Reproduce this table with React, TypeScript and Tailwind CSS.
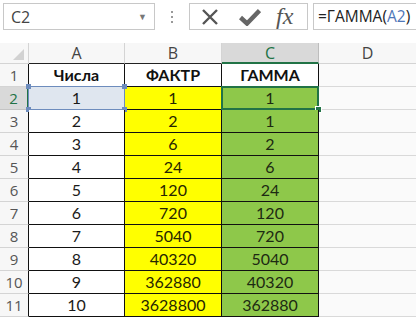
import React from 'react';

const rows: [string, string, string][] = [
  ['1', '1', '1'],
  ['2', '2', '1'],
  ['3', '6', '2'],
  ['4', '24', '6'],
  ['5', '120', '24'],
  ['6', '720', '120'],
  ['7', '5040', '720'],
  ['8', '40320', '5040'],
  ['9', '362880', '40320'],
  ['10', '3628800', '362880'],
];

const ui = "font-['Open_Sans','Noto_Sans',sans-serif]";
const cell = "font-['Lato','Noto_Sans',sans-serif]";

function Handle({ cls }: { cls: string }) {
  return <div className={`absolute w-[5px] h-[5px] bg-[#6d8cbd] ${cls}`} />;
}

export default function App() {
  return (
    <div className="w-[416px] h-[320px] bg-white overflow-hidden select-none">
      {/* formula bar */}
      <div className={`flex items-stretch h-[43px] pt-[3px] pb-[13px] ${ui}`}>
        <div className="ml-[3px] w-[152px] border border-[#c8c8c8] flex items-center justify-between pl-[7px] pr-[7px]">
          <span className="text-[16px] text-[#444]">C2</span>
          <span className="text-[9px] text-[#777] leading-none">▼</span>
        </div>
        <div className="w-[34px] flex flex-col items-center justify-center gap-[3px]">
          <div className="w-[2px] h-[2px] bg-[#999]" />
          <div className="w-[2px] h-[2px] bg-[#999]" />
          <div className="w-[2px] h-[2px] bg-[#999]" />
        </div>
        <div className="w-[119px] border border-[#c8c8c8] flex items-center">
          <svg width="18" height="16" viewBox="0 0 18 16" className="ml-[11px]">
            <path d="M2 1 L16 15 M16 1 L2 15" stroke="#555" strokeWidth="2.4" fill="none" />
          </svg>
          <svg width="22" height="18" viewBox="0 0 22 18" className="ml-[20px]">
            <path d="M1.5 9.5 L8 15.5 L20.5 2.5" stroke="#666" strokeWidth="4.5" fill="none" strokeLinejoin="miter" />
          </svg>
          <span className="ml-[15px] font-['Liberation_Serif',serif] italic text-[24px] text-[#555] leading-none -mt-[2px]">fx</span>
        </div>
        <div className="ml-[5px] flex-1 border-y border-l border-[#c8c8c8] flex items-center pl-[4px] text-[15.5px] text-[#222]">
          =ГАММА(<span className="text-[#4f77b8]">A2</span>)
        </div>
      </div>

      {/* sheet grid */}
      <div className="grid grid-cols-[29px_96px_97px_97px_1fr] grid-rows-[21px_repeat(10,23px)_23px]">
        {/* column headers */}
        <div className="relative bg-[#f7f7f7] border-r border-b border-[#d4d4d4]">
          <svg width="11" height="11" viewBox="0 0 11 11" className="absolute right-[4px] bottom-[3px]">
            <path d="M11 0 L11 11 L0 11 Z" fill="#d2d2d2" />
          </svg>
        </div>
        <div className={`bg-[#f7f7f7] border-r border-[#d4d4d4] border-b border-b-[#222] flex items-center justify-center text-[16px] text-[#444] ${ui}`}>A</div>
        <div className={`bg-[#f7f7f7] border-r border-[#d4d4d4] border-b border-b-[#222] flex items-center justify-center text-[16px] text-[#444] ${ui}`}>B</div>
        <div className={`bg-[#d9d9d9] border-r border-[#bdbdbd] border-b-2 border-b-[#217346] flex items-center justify-center text-[16px] text-[#217346] ${ui}`}>C</div>
        <div className={`bg-[#f7f7f7] border-b border-[#d4d4d4] flex items-center justify-center text-[16px] text-[#444] ${ui}`}>D</div>

        {/* row 1 */}
        <div className={`bg-[#f7f7f7] border-r border-r-[#111] border-b border-b-[#d4d4d4] flex items-center justify-center text-[15px] text-[#555] ${ui}`}>1</div>
        <div className={`bg-white border-r border-b border-[#111] flex items-center justify-center text-[16px] font-bold text-[#111] ${cell}`}>Числа</div>
        <div className={`bg-white border-r border-b border-[#111] flex items-center justify-center text-[16px] font-bold text-[#111] ${cell}`}>ФАКТР</div>
        <div className={`bg-white border-r border-b border-[#111] flex items-center justify-center text-[16px] font-bold text-[#111] ${cell}`}>ГАММА</div>
        <div className="bg-[#fafafa] border-b border-[#d9d9d9]" />

        {rows.map(([a, b, c], i) => {
          const r = i + 2;
          const sel = r === 2;
          return (
            <React.Fragment key={r}>
              <div
                className={`flex items-center justify-center text-[15px] ${ui} ${
                  sel
                    ? 'bg-[#d9d9d9] text-[#217346] border-r-2 border-r-[#217346] border-b border-b-[#c4c4c4]'
                    : 'bg-[#f7f7f7] text-[#555] border-r border-r-[#111] border-b border-b-[#d4d4d4]'
                }`}
              >
                {r}
              </div>
              <div
                className={`relative border-r border-b border-[#111] flex items-center justify-center text-[16px] text-[#1a1a1a] ${cell} ${
                  sel ? 'bg-[#dfe6ef]' : 'bg-white'
                }`}
              >
                {a}
                {sel && (
                  <>
                    <div className="absolute -inset-px border border-[#6d8cbd]" />
                    <Handle cls="-left-[3px] -top-[3px]" />
                    <Handle cls="-right-[3px] -top-[3px]" />
                    <Handle cls="-left-[3px] -bottom-[3px]" />
                    <Handle cls="-right-[3px] -bottom-[3px]" />
                  </>
                )}
              </div>
              <div className={`bg-[#ffff00] border-r border-b border-[#111] flex items-center justify-center text-[16px] text-[#262600] ${cell}`}>
                {b}
              </div>
              <div className={`relative bg-[#8ec84a] border-r border-b border-[#111] flex items-center justify-center text-[16px] text-[#1d2a12] ${cell}`}>
                {c}
                {sel && (
                  <>
                    <div className="absolute -inset-px border-2 border-[#217346]" />
                    <div className="absolute -right-[4px] -bottom-[4px] w-[7px] h-[7px] bg-[#217346] border border-white" />
                  </>
                )}
              </div>
              <div className="bg-[#fafafa] border-b border-[#d9d9d9]" />
            </React.Fragment>
          );
        })}
      </div>
    </div>
  );
}
